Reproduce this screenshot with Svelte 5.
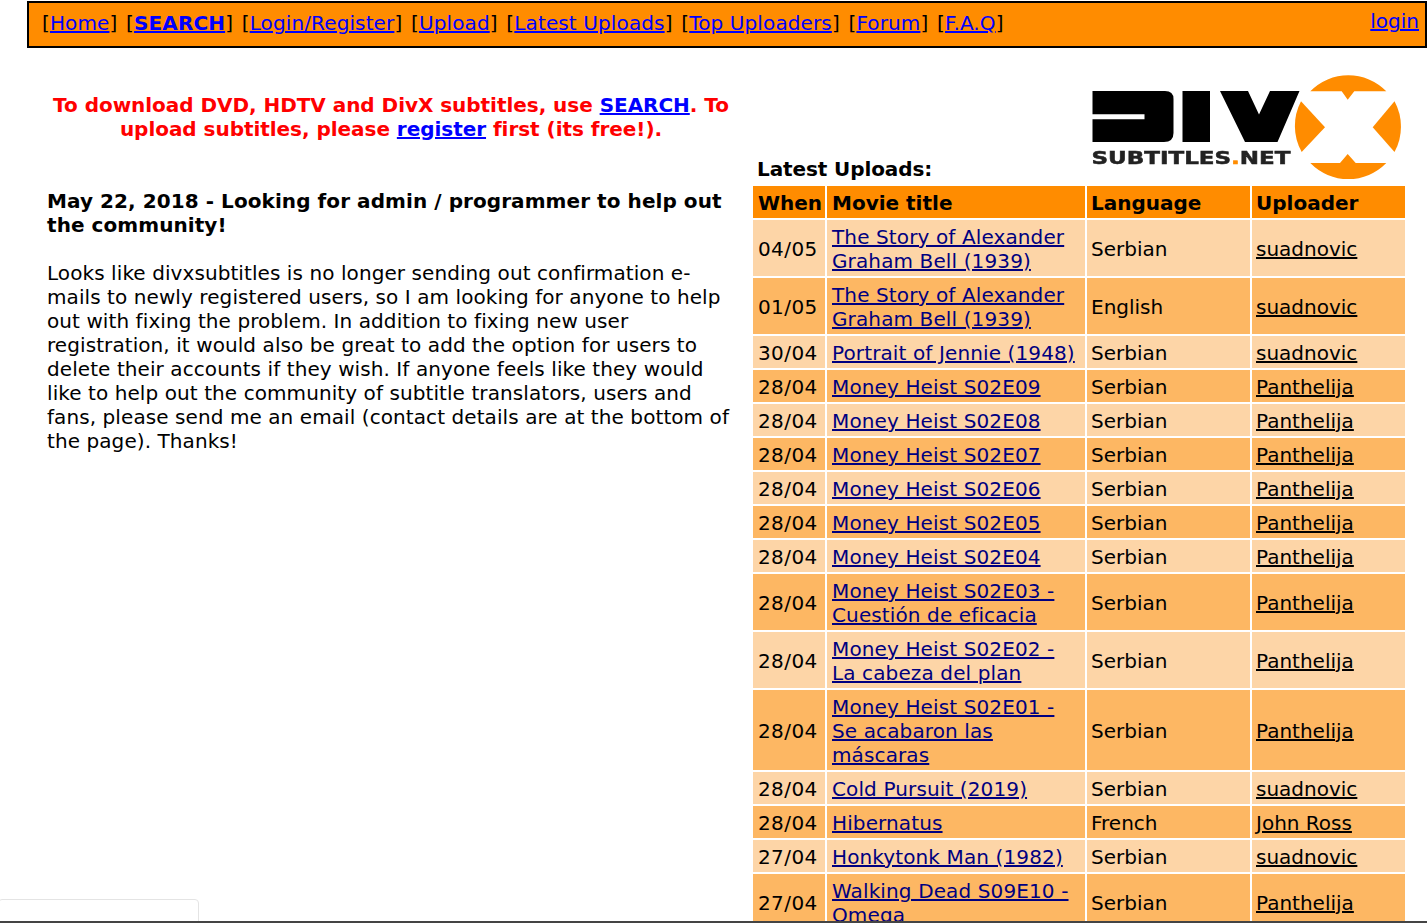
<script>
  const navLinks = [
    { label: 'Home' },
    { label: 'SEARCH', strong: true },
    { label: 'Login/Register' },
    { label: 'Upload' },
    { label: 'Latest Uploads' },
    { label: 'Top Uploaders' },
    { label: 'Forum' },
    { label: 'F.A.Q' }
  ];
  const s = 'suadnovic';
  const p = 'Panthelija';
  const rows = [
    ['04/05', 'The Story of Alexander Graham Bell (1939)', 'Serbian', s],
    ['01/05', 'The Story of Alexander Graham Bell (1939)', 'English', s],
    ['30/04', 'Portrait of Jennie (1948)', 'Serbian', s],
    ['28/04', 'Money Heist S02E09', 'Serbian', p],
    ['28/04', 'Money Heist S02E08', 'Serbian', p],
    ['28/04', 'Money Heist S02E07', 'Serbian', p],
    ['28/04', 'Money Heist S02E06', 'Serbian', p],
    ['28/04', 'Money Heist S02E05', 'Serbian', p],
    ['28/04', 'Money Heist S02E04', 'Serbian', p],
    ['28/04', 'Money Heist S02E03 - Cuestión de eficacia', 'Serbian', p],
    ['28/04', 'Money Heist S02E02 - La cabeza del plan', 'Serbian', p],
    ['28/04', 'Money Heist S02E01 - Se acabaron las máscaras', 'Serbian', p],
    ['28/04', 'Cold Pursuit (2019)', 'Serbian', s],
    ['28/04', 'Hibernatus', 'French', 'John Ross'],
    ['27/04', 'Honkytonk Man (1982)', 'Serbian', s],
    ['27/04', 'Walking Dead S09E10 - Omega', 'Serbian', p]
  ];
</script>

<nav class="topbar">
  <div class="navlinks">
    {#each navLinks as link, i}[<a href="#top" class:strong={link.strong}>{link.label}</a>]{i < navLinks.length - 1 ? ' ' : ''}{/each}
  </div>
  <a class="login" href="#top">login</a>
</nav>

<main class="page">
  <section class="left">
    <p class="notice">To download DVD, HDTV and DivX subtitles, use <a href="#top">SEARCH</a>. To upload subtitles, please <a href="#top">register</a> first (its free!).</p>
    <h2>May 22, 2018 - Looking for admin / programmer to help out the community!</h2>
    <p class="body">Looks like divxsubtitles is no longer sending out confirmation e-mails to newly registered users, so I am looking for anyone to help out with fixing the problem. In addition to fixing new user registration, it would also be great to add the option for users to delete their accounts if they wish. If anyone feels like they would like to help out the community of subtitle translators, users and fans, please send me an email (contact details are at the bottom of the page). Thanks!</p>
  </section>

  <section class="right">
    <div class="righthead">
      <div class="latest">Latest Uploads:</div>
      <svg class="logo" viewBox="1088 72 316 110" width="316" height="110" role="img" aria-label="DivX Subtitles.net logo">
        <path fill="#000" d="M1092.5 91H1165Q1173.5 91 1173.5 99V133Q1173.5 142 1164 142H1092.5V119.3H1144.5V114.3H1092.5Z" />
        <rect x="1182.5" y="91" width="27.5" height="51" fill="#000" />
        <path fill="#000" d="M1220 91H1248L1259 114.5L1270 91H1299.5L1277.5 142H1245Z" />
        <path fill="#ff8c00" d="M1310.3 91.3A53 53 0 0 1 1386.3 91.3H1354.3L1347.7 99.7L1341.7 91.3Z" />
        <path fill="#ff8c00" d="M1310.3 163A53 53 0 0 0 1386.3 163H1355.7L1347.7 154L1340 163Z" />
        <path fill="#ff8c00" d="M1301 101.3L1325 127.3L1301.7 152A53 53 0 0 1 1301 101.3Z" />
        <path fill="#ff8c00" d="M1394.5 101.3L1372.7 127.3L1394.5 152A53 53 0 0 0 1394.5 101.3Z" />
        <text class="logotext" x="1091.5" y="163.5" textLength="199" lengthAdjust="spacingAndGlyphs">SUBTITLES<tspan fill="#ff8c00" stroke="#ff8c00">.</tspan>NET</text>
      </svg>
    </div>
    <table>
      <colgroup>
        <col class="c1" /><col class="c2" /><col class="c3" /><col class="c4" />
      </colgroup>
      <thead>
        <tr><th>When</th><th>Movie title</th><th class="pad4">Language</th><th class="pad4">Uploader</th></tr>
      </thead>
      <tbody>
        {#each rows as r, i}
          <tr class={i % 2 ? 'dark' : 'light'}>
            <td class="date">{r[0]}</td>
            <td class="title"><a href="#top">{r[1]}</a></td>
            <td class="pad4">{r[2]}</td>
            <td class="up pad4"><a href="#top">{r[3]}</a></td>
          </tr>
        {/each}
      </tbody>
    </table>
  </section>
</main>

<div class="cookie"></div>
<div class="bottomline"></div>

<style>
  :global(html), :global(body) {
    margin: 0;
    height: 923px;
    overflow: hidden;
    background: #fff;
  }
  :global(body) {
    font-family: "DejaVu Sans", Verdana, sans-serif;
    font-size: 20px;
    line-height: 24px;
    color: #000;
  }
  .topbar {
    box-sizing: border-box;
    margin: 1px 0 0 27px;
    height: 47px;
    border: 2px solid #000;
    background: #ff8c00;
    display: flex;
    justify-content: space-between;
    align-items: flex-start;
    padding: 8px 6px 0 13px;
  }
  .navlinks {
    white-space: pre;
    letter-spacing: 0.12px;
    word-spacing: 2.2px;
  }
  .navlinks a { color: #0000ff; word-spacing: 0; }
  .navlinks a.strong { font-weight: bold; }
  .login { color: #0000ff; margin-top: -2px; }

  .page {
    display: grid;
    grid-template-columns: 688px 656px;
    column-gap: 16px;
    padding-left: 47px;
  }
  .left { padding-top: 45px; }
  .notice {
    margin: 0 0 48px;
    color: #ff0000;
    font-weight: bold;
    text-align: center;
    letter-spacing: -0.04px;
  }
  .notice a { color: #0000ff; }
  h2 {
    margin: 0 0 24px;
    font-size: 20px;
    line-height: 24px;
    font-weight: bold;
    letter-spacing: 0.07px;
  }
  .body { margin: 0; letter-spacing: 0.08px; }

  .righthead {
    display: flex;
    justify-content: space-between;
    align-items: flex-end;
    height: 136px;
    box-sizing: border-box;
    padding: 0 3px 2px 6px;
  }
  .latest { font-weight: bold; padding-bottom: 1px; letter-spacing: -0.1px; }
  .logo { display: block; flex: none; filter: blur(0.35px); }
  .logotext {
    font-family: "DejaVu Sans", sans-serif;
    font-weight: bold;
    font-size: 17.5px;
    fill: #222;
    stroke: #222;
    stroke-width: 0.5px;
  }

  table {
    border-collapse: separate;
    border-spacing: 2px;
    table-layout: fixed;
    width: 656px;
  }
  .c1 { width: 72px; }
  .c2 { width: 258px; }
  .c3 { width: 163px; }
  .c4 { width: 153px; }
  th {
    background: #ff8c00;
    text-align: left;
    padding: 5px 5px 3px;
    font-weight: bold;
  }
  td { padding: 5px 5px 3px; }
  .pad4 { padding-left: 4px; }
  .date { letter-spacing: 0.4px; }
  .light td { background: #fdd5a7; }
  .dark td { background: #fdb763; }
  .title a { color: #000080; letter-spacing: 0.12px; }
  .up a { color: #000; }

  .cookie {
    position: fixed;
    left: -2px;
    top: 899px;
    width: 199px;
    height: 30px;
    border: 1px solid #e4e4e4;
    border-radius: 4px;
    background: #fff;
  }
  .bottomline {
    position: fixed;
    left: 0;
    right: 0;
    bottom: 0;
    height: 2px;
    background: #444;
  }
</style>
